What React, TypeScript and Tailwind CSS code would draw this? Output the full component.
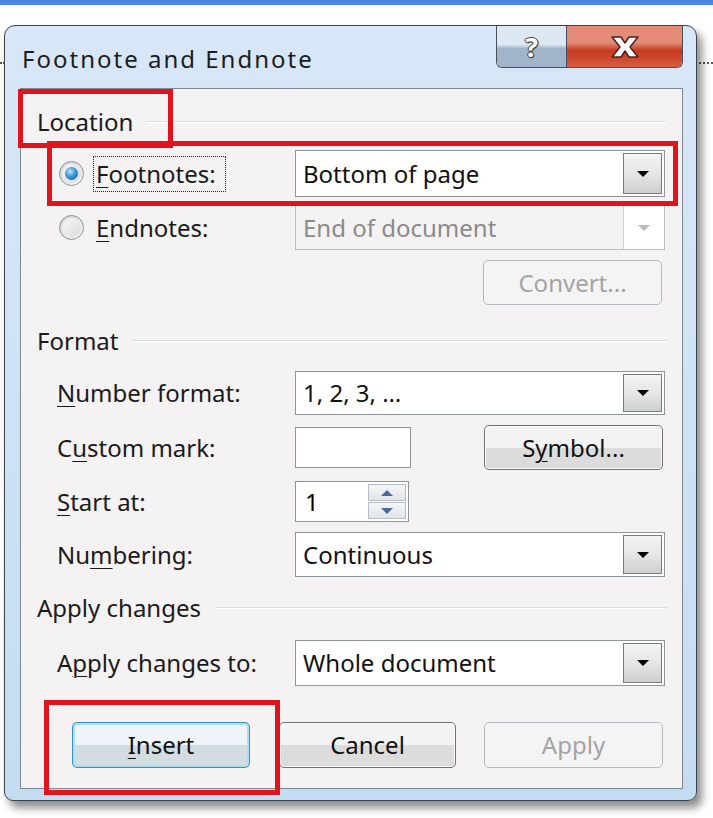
const font = { fontFamily: '"Noto Sans", "Open Sans", sans-serif' };

function Arrow({ disabled }: { disabled?: boolean }) {
  return (
    <svg width="14" height="8" viewBox="0 0 14 8">
      <path d="M1 1 L13 1 L7 7 Z" fill={disabled ? '#b8bcc0' : '#000'} />
    </svg>
  );
}

function Combo({ value, disabled }: { value: string; disabled?: boolean }) {
  return (
    <div
      className={`flex h-full w-[370px] items-stretch border ${
        disabled ? 'border-[#b9bdc1] bg-[#f4f2f2] text-[#8a8a8a]' : 'border-[#8e9499] bg-white text-[#111]'
      }`}
    >
      <div className="flex flex-1 items-center pl-[7px]">{value}</div>
      {disabled ? (
        <div className="flex w-[41px] items-center justify-center border-l border-[#cfd2d5] bg-white">
          <Arrow disabled />
        </div>
      ) : (
        <div className="m-[2px] flex w-[39px] items-center justify-center border border-[#7a7a7a] bg-gradient-to-b from-[#f4f4f4] via-[#e6e6e6] to-[#cfcfcf]">
          <Arrow />
        </div>
      )}
    </div>
  );
}

function Button({
  children,
  disabled,
  primary,
  width,
}: {
  children: React.ReactNode;
  disabled?: boolean;
  primary?: boolean;
  width: string;
}) {
  if (disabled) {
    return (
      <div className={`flex h-full ${width} items-center justify-center rounded-[5px] border border-[#b6babe] bg-[#f5f4f4] text-[#a3a3a3]`}>
        {children}
      </div>
    );
  }
  return (
    <div
      className={`flex h-full ${width} items-center justify-center rounded-[5px] border text-[#111] ${
        primary
          ? 'border-[#3c8dbc] bg-gradient-to-b from-[#eef4f7] from-50% to-[#d3dce1] to-50% shadow-[inset_0_0_0_2px_#a9e0f3]'
          : 'border-[#707070] bg-gradient-to-b from-[#f3f3f3] from-50% to-[#dcdcdc] to-50% shadow-[inset_0_0_0_1px_#fbfbfb]'
      }`}
    >
      {children}
    </div>
  );
}

function GroupHeader({ label }: { label: string }) {
  return (
    <div className="flex h-[28px] items-center pr-[15px]">
      <span className="text-[#1a1a1a]">{label}</span>
      <div className="ml-[14px] h-[2px] flex-1 border-t border-b border-t-[#d8dde2] border-b-white" />
    </div>
  );
}

function U({ children }: { children: React.ReactNode }) {
  return <span className="underline decoration-1 underline-offset-[4px]">{children}</span>;
}

function Radio({ checked }: { checked?: boolean }) {
  return (
    <div className="flex h-[25px] w-[25px] items-center justify-center rounded-full border border-[#8f9397] bg-gradient-to-br from-[#cfd2d6] to-[#f7f7f7]">
      <div className="flex h-[19px] w-[19px] items-center justify-center rounded-full bg-gradient-to-br from-[#f6f6f6] to-[#dcdcdc]">
        {checked && (
          <div className="h-[13px] w-[13px] rounded-full bg-[radial-gradient(circle_at_40%_35%,#bfe6ff_0%,#3a98d6_45%,#164f7c_100%)]" />
        )}
      </div>
    </div>
  );
}

function Row({ label, children, h, mt }: { label: React.ReactNode; children: React.ReactNode; h: string; mt: string }) {
  return (
    <div className={`flex ${h} ${mt} items-center`}>
      <div className="w-[258px] pl-[20px] text-[#1a1a1a]">{label}</div>
      {children}
    </div>
  );
}

export default function App() {
  return (
    <div className="relative h-[818px] w-[713px] overflow-hidden bg-white text-[24px] leading-[32px]" style={font}>
      <div className="h-[5px] bg-[#4a86e8]" />
      <div className="absolute left-0 top-[62px] w-full border-t-2 border-dotted border-[#555]" />

      <div className="relative z-10 ml-[4px] mt-[20px] flex h-[776px] w-[693px] flex-col rounded-t-[11px] rounded-b-[9px] border border-[#3b4148] bg-gradient-to-b from-[#d7e7f7] via-[#cfe2f5] to-[#c4dcf1] shadow-[5px_7px_9px_rgba(0,0,0,0.45)]">
        <div className="flex h-[62px] items-start justify-between pl-[17px] pr-[13px]">
          <div className="pt-[17px] text-[24px] tracking-[2px] text-[#1c1c1c]">Footnote and Endnote</div>
          <div className="flex h-[42px] overflow-hidden rounded-b-[6px] border border-t-0 border-[#47505a]">
            <div className="flex w-[69px] items-center justify-center bg-gradient-to-b from-[#dde8f3] from-45% to-[#a0b5c9] to-55%">
              <span className="text-[27px] font-bold leading-none text-white [text-shadow:1px_0_0_#3d3d3d,-1px_0_0_#3d3d3d,0_1px_0_#3d3d3d,0_-1px_0_#3d3d3d,1px_1px_1px_#3d3d3d]">
                ?
              </span>
            </div>
            <div className="flex w-[116px] items-center justify-center border-l border-[#47505a] bg-gradient-to-b from-[#e48c78] from-40% via-[#c4371e] via-60% to-[#d65d40]">
              <svg width="32" height="24" viewBox="0 0 32 24">
                <path
                  d="M3 2 H12 L16 8 L20 2 H29 L21 12 L29 22 H20 L16 16 L12 22 H3 L11 12 Z"
                  fill="#fff"
                  stroke="#4a2318"
                  strokeWidth="1.5"
                  strokeLinejoin="round"
                />
              </svg>
            </div>
          </div>
        </div>

        <div className="relative ml-[15px] mr-[13px] h-[701px] border border-[#7d8891] bg-[#f4f2f2] pl-[16px]">
          <div className="mt-[19px]">
            <GroupHeader label="Location" />
          </div>

          <div className="mt-[14px] flex h-[47px] items-center">
            <div className="flex w-[258px] items-center pl-[22px]">
              <Radio checked />
              <div className="ml-[9px] border border-dotted border-[#222] py-[1px] pl-[2px] pr-[9px] text-[#1a1a1a]">
                <U>F</U>ootnotes:
              </div>
            </div>
            <Combo value="Bottom of page" />
          </div>

          <div className="mt-[8px] flex h-[45px] items-center">
            <div className="flex w-[258px] items-center pl-[22px]">
              <Radio />
              <div className="ml-[12px] text-[#1a1a1a]">
                <U>E</U>ndnotes:
              </div>
            </div>
            <Combo value="End of document" disabled />
          </div>

          <div className="mt-[10px] flex h-[45px] pl-[446px]">
            <Button disabled width="w-[179px]">Convert...</Button>
          </div>

          <div className="mt-[22px]">
            <GroupHeader label="Format" />
          </div>

          <Row label={<><U>N</U>umber format:</>} h="h-[44px]" mt="mt-[16px]">
            <Combo value="1, 2, 3, …" />
          </Row>

          <Row label={<>C<U>u</U>stom mark:</>} h="h-[45px]" mt="mt-[10px]">
            <div className="h-[41px] w-[116px] border border-[#8e9499] bg-white" />
            <div className="ml-[73px] flex h-full">
              <Button width="w-[179px]">
                S<U>y</U>mbol...
              </Button>
            </div>
          </Row>

          <Row label={<><U>S</U>tart at:</>} h="h-[41px]" mt="mt-[11px]">
            <div className="flex h-full w-[114px] border border-[#8e9499] bg-white">
              <div className="flex flex-1 items-center pl-[9px]">1</div>
              <div className="m-[2px] flex w-[38px] flex-col gap-[1px]">
                <div className="flex flex-1 items-center justify-center border border-[#b5bcc4] bg-gradient-to-b from-[#f6f6f6] to-[#e1e4e8]">
                  <svg width="12" height="6" viewBox="0 0 12 6">
                    <path d="M0 6 L6 0 L12 6 Z" fill="#4a6b9c" />
                  </svg>
                </div>
                <div className="flex flex-1 items-center justify-center border border-[#b5bcc4] bg-gradient-to-b from-[#f6f6f6] to-[#e1e4e8]">
                  <svg width="12" height="6" viewBox="0 0 12 6">
                    <path d="M0 0 L12 0 L6 6 Z" fill="#4a6b9c" />
                  </svg>
                </div>
              </div>
            </div>
          </Row>

          <Row label={<>Nu<U>m</U>bering:</>} h="h-[45px]" mt="mt-[10px]">
            <Combo value="Continuous" />
          </Row>

          <div className="mt-[17px]">
            <GroupHeader label="Apply changes" />
          </div>

          <Row label={<>A<U>p</U>ply changes to:</>} h="h-[46px]" mt="mt-[18px]">
            <Combo value="Whole document" />
          </Row>

          <div className="mt-[36px] flex h-[46px] pl-[35px]">
            <Button primary width="w-[178px]">
              <U>I</U>nsert
            </Button>
            <div className="ml-[29px] flex">
              <Button width="w-[177px]">Cancel</Button>
            </div>
            <div className="ml-[28px] flex">
              <Button disabled width="w-[179px]">Apply</Button>
            </div>
          </div>

          <div className="pointer-events-none absolute left-[-3px] top-[0px] h-[59px] w-[155px] border-[5px] border-[#e0141c]" />
          <div className="pointer-events-none absolute left-[26px] top-[52px] h-[65px] w-[631px] border-[5px] border-[#e0141c]" />
          <div className="pointer-events-none absolute left-[23px] top-[611px] h-[95px] w-[236px] border-[5px] border-[#e0141c]" />
        </div>
      </div>
    </div>
  );
}
